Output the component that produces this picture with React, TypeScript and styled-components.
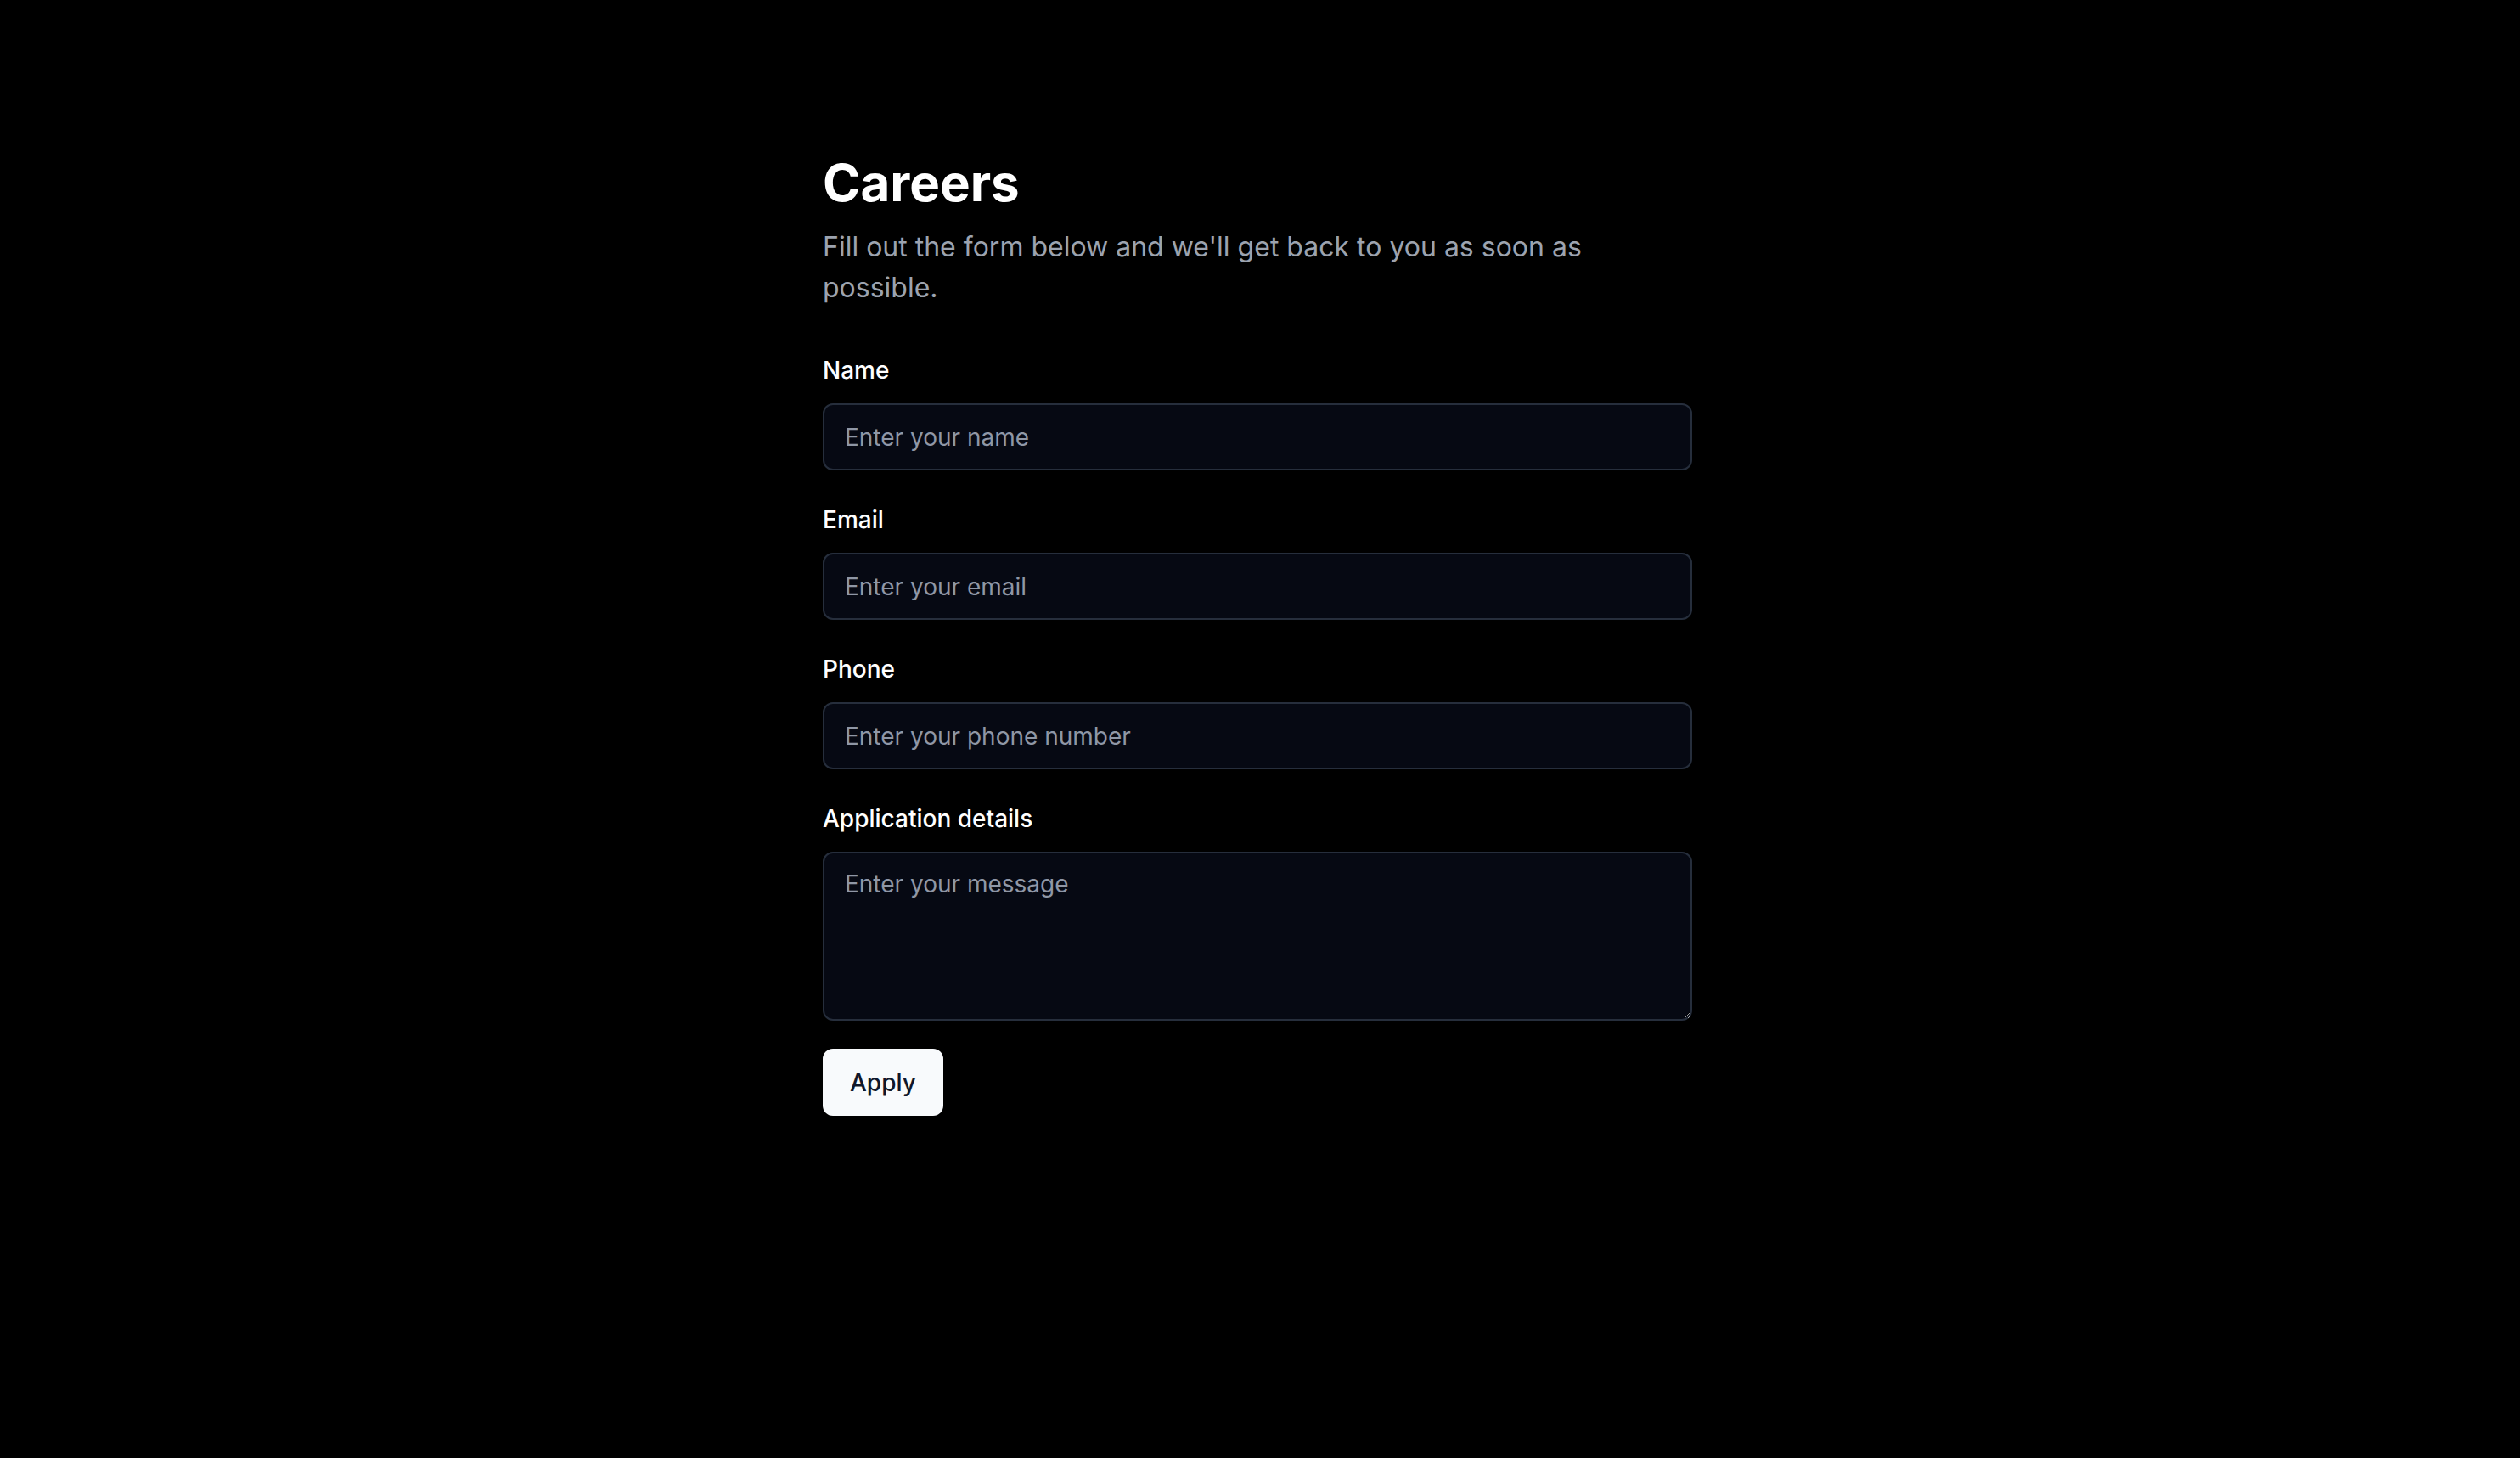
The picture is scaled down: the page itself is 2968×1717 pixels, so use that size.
import styled, { createGlobalStyle } from 'styled-components';

const GlobalStyle = createGlobalStyle`
  html, body {
    margin: 0;
    padding: 0;
    background-color: #000;
  }
  body {
    font-family: Inter, "Noto Sans", "Liberation Sans", sans-serif;
    color: #fff;
  }
  * {
    box-sizing: border-box;
  }
`;

const Page = styled.div`
  min-height: 100vh;
  display: flex;
  justify-content: center;
  padding: 179px 6px 0 0;
`;

const Container = styled.div`
  width: 1024px;
  display: flex;
  flex-direction: column;
`;

const Title = styled.h1`
  margin: 0;
  font-size: 60px;
  line-height: 72px;
  font-weight: 700;
  letter-spacing: 0;
  color: #fff;
`;

const Subtitle = styled.p`
  margin: 16px 0 0;
  font-size: 32px;
  line-height: 48px;
  color: #9ca3af;
`;

const Form = styled.form`
  margin-top: 59px;
  display: flex;
  flex-direction: column;
  gap: 44px;
`;

const Field = styled.div`
  display: flex;
  flex-direction: column;
  gap: 25px;
`;

const Label = styled.label`
  font-size: 28px;
  line-height: 28px;
  font-weight: 500;
  color: #fff;
`;

const fieldBase = `
  width: 100%;
  border: 2px solid #262e3c;
  border-radius: 12px;
  background-color: #060913;
  color: #fff;
  font-family: Inter, "Noto Sans", "Liberation Sans", sans-serif;
  font-size: 28px;
  line-height: 40px;
  padding: 0 24px;
  outline: none;

  &::placeholder {
    color: #8f97a6;
  }
`;

const Input = styled.input`
  ${fieldBase}
  height: 79px;
`;

const TextArea = styled.textarea`
  ${fieldBase}
  height: 199px;
  padding-top: 16px;
  padding-bottom: 16px;
  display: block;
`;

const SubmitButton = styled.button`
  align-self: flex-start;
  margin-top: -11px;
  height: 79px;
  padding: 0 32px;
  border: none;
  border-radius: 12px;
  background-color: #f8fafc;
  color: #0f172a;
  font-family: Inter, "Noto Sans", "Liberation Sans", sans-serif;
  font-size: 28px;
  font-weight: 500;
  cursor: pointer;
`;

const fields = [
  { id: 'name', label: 'Name', placeholder: 'Enter your name', type: 'text' },
  { id: 'email', label: 'Email', placeholder: 'Enter your email', type: 'email' },
  { id: 'phone', label: 'Phone', placeholder: 'Enter your phone number', type: 'tel' },
];

const App = () => {
  return (
    <>
      <GlobalStyle />
      <Page>
        <Container>
          <Title>Careers</Title>
          <Subtitle>
            Fill out the form below and we'll get back to you as soon as possible.
          </Subtitle>
          <Form onSubmit={(e) => e.preventDefault()}>
            {fields.map((field) => (
              <Field key={field.id}>
                <Label htmlFor={field.id}>{field.label}</Label>
                <Input id={field.id} type={field.type} placeholder={field.placeholder} />
              </Field>
            ))}
            <Field>
              <Label htmlFor="message">Application details</Label>
              <TextArea id="message" placeholder="Enter your message" />
            </Field>
            <SubmitButton type="submit">Apply</SubmitButton>
          </Form>
        </Container>
      </Page>
    </>
  );
};

export default App;
